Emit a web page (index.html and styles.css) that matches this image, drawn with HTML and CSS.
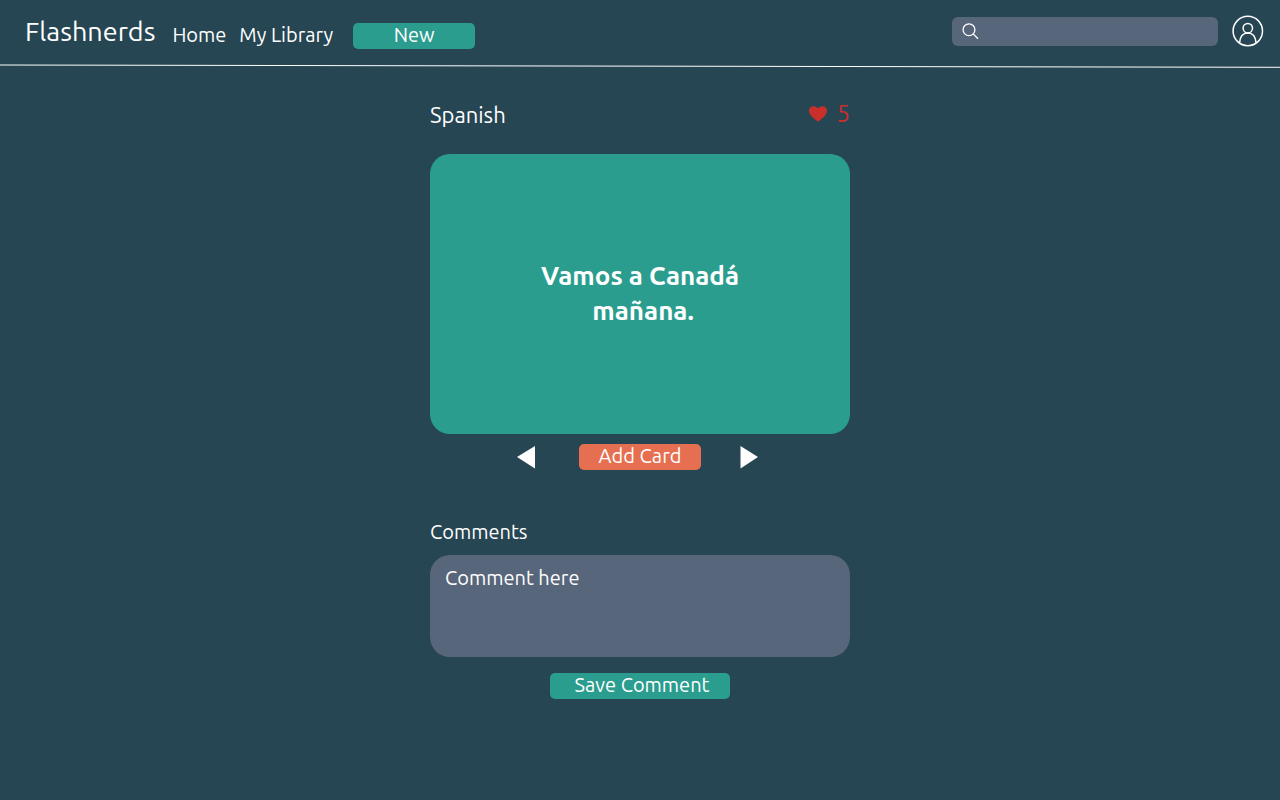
FILE: index.html
```html
<!DOCTYPE html>
<html lang="en">
<head>
<meta charset="utf-8">
<meta name="viewport" content="width=device-width, initial-scale=1">
<title>Flashnerds</title>
<link rel="stylesheet" href="styles.css">
</head>
<body>
<header class="header">
  <div class="bar">
    <a class="brand" href="#">Flashnerds</a>
    <nav class="nav">
      <a class="nav-link" href="#">Home</a>
      <a class="nav-link" href="#">My Library</a>
    </nav>
    <button class="button button-new" type="button">New</button>
    <form class="search" role="search">
      <svg class="search-icon" viewBox="0 0 18 18" aria-hidden="true"><circle cx="7" cy="7.700" r="5.900"/><path d="M11.200 11.900 16 16.700"/></svg>
      <input class="search-input" type="search" aria-label="Search">
    </form>
    <a class="account" href="#" aria-label="Account">
      <svg class="account-icon" viewBox="0 0 32 32" aria-hidden="true"><circle cx="15.800" cy="16" r="14.700"/><circle cx="15.800" cy="13.200" r="4.700"/><path d="M7.500 28C8 21.500 11.300 17.900 15.800 17.900S23.600 21.500 24.100 28"/></svg>
    </a>
  </div>
  <svg class="rule" viewBox="0 0 1280 4" preserveAspectRatio="none" aria-hidden="true"><path d="M0 1 1280 3.300"/></svg>
</header>
<main class="deck">
  <div class="deck-head">
    <h1 class="deck-title">Spanish</h1>
    <button class="likes" type="button" aria-label="5 likes">
      <svg class="heart" viewBox="0 0 18 16" aria-hidden="true"><path d="M9 15.800C7 14 0 9.500 0 5C0 2 2 .2 4.700 .2C6.600 .2 8.200 1.200 9 2.600C9.800 1.200 11.400 .2 13.300 .2C16 .2 18 2 18 5C18 9.500 11 14 9 15.800Z"/></svg>
      <span>5</span>
    </button>
  </div>
  <section class="card">
    <p class="card-text">Vamos a Canadá<br>&nbsp;mañana.</p>
  </section>
  <div class="controls">
    <button class="arrow arrow-prev" type="button" aria-label="Previous card"><svg class="arrow-icon" viewBox="0 0 18 23" aria-hidden="true"><path d="M18 0V22.500L0 11Z"/></svg></button>
    <button class="button button-add" type="button">Add Card</button>
    <button class="arrow arrow-next" type="button" aria-label="Next card"><svg class="arrow-icon" viewBox="0 0 18 23" aria-hidden="true"><path d="M.5 0V22.500L18 11Z"/></svg></button>
  </div>
  <form class="comments">
    <label class="comments-label" for="comment">Comments</label>
    <textarea class="comment-box" id="comment" placeholder="Comment here"></textarea>
    <button class="button button-save" type="button">Save Comment</button>
  </form>
</main>
</body>
</html>
```
FILE: styles.css
```css
* {
  box-sizing: border-box;
}

body {
  margin: 0;
  background: #264653;
  color: #fff;
  font-family: Ubuntu, "Noto Sans", sans-serif;
  font-size: 20px;
  line-height: 26px;
}

button,
input,
textarea {
  font: inherit;
  color: inherit;
  border: 0;
  margin: 0;
  padding: 0;
}

button {
  background: none;
  cursor: pointer;
}

a {
  color: inherit;
  text-decoration: none;
}

.bar {
  display: flex;
  align-items: center;
  min-height: 64px;
  padding: 0 16px 2px 25px;
}

.brand {
  font-size: 27px;
}

.nav {
  display: flex;
  gap: 13px;
  margin: 8px 20px 0 17px;
}

.button {
  min-width: 122px;
  padding-bottom: 2px;
  background: #2a9d8f;
  border-radius: 5px;
  line-height: 24px;
}

.button-new {
  margin-top: 10px;
}

.search {
  display: flex;
  align-items: center;
  gap: 8px;
  width: 266px;
  height: 29px;
  margin-left: auto;
  padding: 0 10px;
  background: #58667b;
  border-radius: 6px;
}

.search-icon {
  flex: none;
  width: 18px;
  height: 18px;
  fill: none;
  stroke: #fff;
  stroke-width: 1.3;
}

.search-input {
  flex: 1;
  min-width: 0;
  background: none;
  outline: none;
}

.account {
  margin-left: 14px;
}

.account-icon {
  display: block;
  width: 32px;
  height: 32px;
  fill: none;
  stroke: #fff;
  stroke-width: 1.5;
}

.rule {
  display: block;
  width: 100%;
  height: 4px;
  fill: none;
  stroke: #fff;
  stroke-width: 1;
}

.deck {
  max-width: 420px;
  margin: 0 auto;
  padding-top: 31px;
}

.deck-head {
  display: flex;
  align-items: center;
  justify-content: space-between;
  margin-bottom: 25px;
  line-height: 30px;
}

.deck-title {
  margin: 0;
  padding-top: 1px;
  font-size: 22px;
  font-weight: 400;
  line-height: 29px;
}

.likes {
  display: flex;
  align-items: center;
  gap: 9px;
  color: #c9302c;
  font-size: 24px;
}

.heart {
  width: 18px;
  height: 16px;
  fill: #c9302c;
}

.card {
  display: flex;
  align-items: center;
  justify-content: center;
  min-height: 280px;
  padding-bottom: 2px;
  background: #2a9d8f;
  border-radius: 20px;
}

.card-text {
  margin: 0;
  font-size: 26px;
  font-weight: 700;
  line-height: 35px;
  text-align: center;
}

.controls {
  display: flex;
  align-items: center;
  justify-content: center;
  margin-top: 10px;
  padding-right: 5px;
}

.button-add {
  background: #e76f51;
}

.arrow-icon {
  display: block;
  width: 18px;
  height: 23px;
  fill: #fff;
}

.arrow-prev {
  margin-right: 44px;
}

.arrow-next {
  margin-left: 39px;
}

.comments {
  display: flex;
  flex-direction: column;
  margin-top: 49px;
}

.comments-label {
  margin-bottom: 10px;
}

.comment-box {
  height: 102px;
  padding: 10px 15px;
  background: #58667b;
  border-radius: 20px;
  outline: none;
  resize: none;
}

.comment-box::placeholder {
  color: #fff;
  opacity: 1;
}

.button-save {
  align-self: center;
  min-width: 180px;
  margin-top: 16px;
  padding-left: 4px;
}
```
